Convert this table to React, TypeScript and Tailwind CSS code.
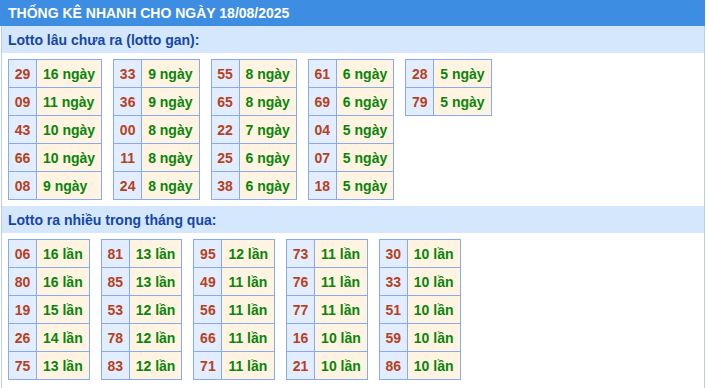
const ganTables: [string, string][][] = [
  [['29', '16 ngày'], ['09', '11 ngày'], ['43', '10 ngày'], ['66', '10 ngày'], ['08', '9 ngày']],
  [['33', '9 ngày'], ['36', '9 ngày'], ['00', '8 ngày'], ['11', '8 ngày'], ['24', '8 ngày']],
  [['55', '8 ngày'], ['65', '8 ngày'], ['22', '7 ngày'], ['25', '6 ngày'], ['38', '6 ngày']],
  [['61', '6 ngày'], ['69', '6 ngày'], ['04', '5 ngày'], ['07', '5 ngày'], ['18', '5 ngày']],
  [['28', '5 ngày'], ['79', '5 ngày']],
];

const hotTables: [string, string][][] = [
  [['06', '16 lần'], ['80', '16 lần'], ['19', '15 lần'], ['26', '14 lần'], ['75', '13 lần']],
  [['81', '13 lần'], ['85', '13 lần'], ['53', '12 lần'], ['78', '12 lần'], ['83', '12 lần']],
  [['95', '12 lần'], ['49', '11 lần'], ['56', '11 lần'], ['66', '11 lần'], ['71', '11 lần']],
  [['73', '11 lần'], ['76', '11 lần'], ['77', '11 lần'], ['16', '10 lần'], ['21', '10 lần']],
  [['30', '10 lần'], ['33', '10 lần'], ['51', '10 lần'], ['59', '10 lần'], ['86', '10 lần']],
];

function StatTable({ rows }: { rows: [string, string][] }) {
  return (
    <table className="border-collapse self-start">
      <tbody>
        {rows.map(([num, val]) => (
          <tr key={num} className="h-[28px]">
            <td className="w-[28px] border border-[#86abf2] bg-[#e2eeff] p-0 text-center text-[#b7411d]">{num}</td>
            <td className="border border-[#86abf2] bg-[#fff4e2] px-[6px] text-left text-[#0a840a]">{val}</td>
          </tr>
        ))}
      </tbody>
    </table>
  );
}

function Section({ title, tables }: { title: string; tables: [string, string][][] }) {
  return (
    <>
      <div className="flex h-[27px] items-center bg-[#d4e7fc] px-[6px] text-[#1646a6]">{title}</div>
      <div className="flex gap-[11px] px-[6px] pt-[6px] pb-[6px]">
        {tables.map((rows, i) => (
          <StatTable key={i} rows={rows} />
        ))}
      </div>
    </>
  );
}

export default function App() {
  return (
    <div className="w-[707px] h-[388px] bg-white font-['Liberation_Sans',Arial,sans-serif] text-[14px] font-bold leading-4">
      {/* Header */}
      <div className="flex h-[26px] w-[705px] items-center bg-[#3d8ee2] px-[8px] text-white">
        THỐNG KÊ NHANH CHO NGÀY 18/08/2025
      </div>
      <div className="ml-px h-[362px] w-[704px] border-x border-[#bccde2]">
        <Section title="Lotto lâu chưa ra (lotto gan):" tables={ganTables} />
        <Section title="Lotto ra nhiều trong tháng qua:" tables={hotTables} />
      </div>
    </div>
  );
}
